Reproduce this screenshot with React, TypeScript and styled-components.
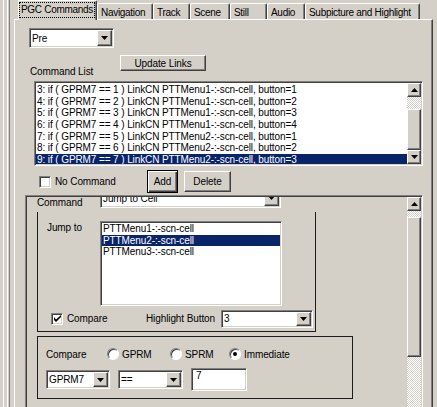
import React from "react";
import styled, { createGlobalStyle, css } from "styled-components";

const GlobalStyle = createGlobalStyle`
  html, body { margin: 0; padding: 0; background: #d4d0c8; }
  * { box-sizing: border-box; }
`;

const sunken = css`
  border: 1px solid;
  border-color: #808080 #ffffff #ffffff #808080;
  box-shadow: inset 1px 1px 0 #404040, inset -1px -1px 0 #d4d0c8;
`;

const raised = css`
  border: 1px solid;
  border-color: #ffffff #404040 #404040 #ffffff;
  box-shadow: inset -1px -1px 0 #808080;
  background: #d4d0c8;
`;

const checker = css`
  background: repeating-conic-gradient(#ffffff 0 25%, #d4d0c8 0 50%) 0 0 / 2px 2px;
`;

const Screen = styled.div`
  width: 437px;
  height: 407px;
  overflow: hidden;
  display: flex;
  background: #d4d0c8;
  color: #000;
  font-family: "Liberation Sans", Arial, sans-serif;
  font-size: 10px;
  letter-spacing: -0.1px;
`;

const Splitter = styled.div`
  width: 14px;
  flex: none;
  background: linear-gradient(
    to right,
    #d4d0c8 0 3px,
    #ffffff 3px 4px,
    #d4d0c8 4px 7px,
    #ffffff 7px 8px,
    #d4d0c8 8px 9px,
    #808080 9px 10px,
    #d4d0c8 10px
  );
`;

const TabControl = styled.div`
  width: 419px;
  flex: none;
  display: flex;
  flex-direction: column;
`;

const TabStrip = styled.div`
  height: 19px;
  display: flex;
  align-items: flex-end;
  padding-left: 4px;
  position: relative;
  z-index: 1;
`;

const Tab = styled.div<{ $w: number; $active?: boolean }>`
  width: ${(p) => p.$w}px;
  height: ${(p) => (p.$active ? 20 : 16)}px;
  margin-bottom: ${(p) => (p.$active ? -1 : 0)}px;
  border: 1px solid;
  border-bottom: none;
  border-color: #ffffff #404040 #404040 #ffffff;
  border-radius: 2px 2px 0 0;
  box-shadow: inset -1px 0 0 #808080;
  background: #d4d0c8;
  padding: ${(p) => (p.$active ? "2px 0 0 1px" : "3px 0 0 3px")};
  white-space: nowrap;
  overflow: hidden;
  line-height: 12px;
  letter-spacing: -0.3px;
`;

const FocusText = styled.span`
  display: inline-block;
  outline: 1px dotted #000;
  padding: 1px 1px;
`;

const TabPanel = styled.div`
  flex: 1;
  border-left: 1px solid #ffffff;
  border-top: 1px solid #ffffff;
  border-right: 1px solid #404040;
  box-shadow: inset -1px 0 0 #808080;
  padding: 8px 0 0 14px;
  display: flex;
  flex-direction: column;
`;

const ComboBox = styled.div<{ $w: number; $h: number }>`
  ${sunken};
  width: ${(p) => p.$w}px;
  height: ${(p) => p.$h}px;
  flex: none;
  background: #ffffff;
  padding: 1px;
  display: flex;
  align-items: stretch;
`;

const ComboText = styled.span`
  flex: 1;
  padding-left: 1px;
  white-space: nowrap;
  overflow: hidden;
  display: flex;
  align-items: center;
`;

const ComboButton = styled.span`
  ${raised};
  width: 15px;
  flex: none;
  display: flex;
  align-items: center;
  justify-content: center;
`;

const Arrow = ({ up }: { up?: boolean }) => (
  <svg width="7" height="4" viewBox="0 0 7 4">
    <path d={up ? "M3.5 0L7 4H0z" : "M0 0H7L3.5 4z"} fill="#000" />
  </svg>
);

const Combo = ({ w, h, text }: { w: number; h: number; text: string }) => (
  <ComboBox $w={w} $h={h}>
    <ComboText>{text}</ComboText>
    <ComboButton>
      <Arrow />
    </ComboButton>
  </ComboBox>
);

const LinksRow = styled.div`
  display: flex;
  height: 26px;
  margin-top: 7px;
`;

const FieldLabel = styled.span<{ $w: number; $ml?: number }>`
  width: ${(p) => p.$w}px;
  margin-left: ${(p) => p.$ml ?? 0}px;
  flex: none;
  white-space: nowrap;
`;

const ListLabel = styled(FieldLabel)`
  align-self: flex-end;
  margin-bottom: 4px;
`;

const Button = styled.button<{ $w: number; $h: number; $default?: boolean }>`
  ${raised};
  width: ${(p) => p.$w}px;
  height: ${(p) => p.$h}px;
  flex: none;
  padding: 0;
  font: inherit;
  letter-spacing: inherit;
  color: #000;
  ${(p) =>
    p.$default &&
    css`
      border: 1px solid #000;
      box-shadow: inset 1px 1px 0 #ffffff, inset -1px -1px 0 #404040, inset -2px -2px 0 #808080;
    `}
`;

const CommandList = styled.div`
  ${sunken};
  margin-left: 5px;
  width: 389px;
  height: 85px;
  background: #ffffff;
  padding: 1px;
  display: flex;
  flex: none;
`;

const Rows = styled.div`
  flex: 1;
  padding-top: 1px;
  overflow: hidden;
`;

const Row = styled.div<{ $sel?: boolean }>`
  height: 11.67px;
  line-height: 11.67px;
  padding-left: 1px;
  white-space: nowrap;
  overflow: hidden;
  background: ${(p) => (p.$sel ? "#0a246a" : "transparent")};
  color: ${(p) => (p.$sel ? "#ffffff" : "#000")};
`;

const VScroll = styled.div`
  width: 14px;
  flex: none;
  display: flex;
  flex-direction: column;
`;

const ScrollBtn = styled.div`
  ${raised};
  height: 14px;
  flex: none;
  display: flex;
  align-items: center;
  justify-content: center;
`;

const Track = styled.div<{ $h?: number }>`
  ${checker};
  height: ${(p) => (p.$h ? `${p.$h}px` : "auto")};
  flex: ${(p) => (p.$h ? "none" : 1)};
`;

const Thumb = styled.div<{ $h?: number }>`
  ${raised};
  height: ${(p) => (p.$h ? `${p.$h}px` : "auto")};
  flex: ${(p) => (p.$h ? "none" : 1)};
`;

const ActionRow = styled.div`
  display: flex;
  align-items: center;
  height: 23px;
  margin-top: 4px;
  gap: 6px;
`;

const CheckItem = styled.label<{ $w: number; $ml: number }>`
  display: flex;
  align-items: center;
  gap: 4px;
  width: ${(p) => p.$w}px;
  margin-left: ${(p) => p.$ml}px;
  flex: none;
  white-space: nowrap;
`;

const CheckBoxBox = styled.span`
  ${sunken};
  width: 12px;
  height: 12px;
  flex: none;
  background: #ffffff;
  display: flex;
  align-items: center;
  justify-content: center;
`;

const Check = ({ on }: { on?: boolean }) => (
  <CheckBoxBox>
    {on && (
      <svg width="7" height="7" viewBox="0 0 7 7">
        <path d="M0 2v3l2 2 5-5V0L2 4.5z" fill="#000" />
      </svg>
    )}
  </CheckBoxBox>
);

const ScrollPanel = styled.div`
  ${sunken};
  margin-left: -4px;
  margin-top: 2px;
  width: 398px;
  height: 230px;
  flex: none;
  padding: 1px;
  display: flex;
  overflow: hidden;
`;

const PanelContent = styled.div`
  flex: 1;
  overflow: hidden;
  display: flex;
  flex-direction: column;
  align-items: flex-start;
  padding-left: 10px;
`;

const CommandRow = styled.div`
  display: flex;
  margin-top: -9px;
`;

const CommandLabel = styled(FieldLabel)`
  padding-top: 9px;
`;

const Group = styled.div<{ $w: number; $noTop?: boolean }>`
  width: ${(p) => p.$w}px;
  border: 1px solid #1c1c1c;
  ${(p) => p.$noTop && "border-top: none;"}
  flex: none;
  margin-top: 4px;
  display: flex;
  flex-direction: column;
`;

const JumpRow = styled.div`
  display: flex;
  padding: 9px 0 0 9px;
`;

const JumpLabel = styled(FieldLabel)`
  padding-top: 1px;
`;

const JumpList = styled.div`
  ${sunken};
  width: 182px;
  height: 85px;
  background: #ffffff;
  padding: 1px;
`;

const CompareRow = styled.div`
  display: flex;
  align-items: center;
  height: 17px;
  margin: 4px 0 4px 0;
`;

const HighlightLabel = styled.span`
  width: 75px;
  flex: none;
  white-space: nowrap;
`;

const Group2Body = styled.div`
  display: flex;
  flex-direction: column;
  padding: 10px 0 7px 8px;
`;

const RadioRow = styled.div`
  display: flex;
  align-items: center;
  height: 14px;
`;

const RadioItem = styled.label<{ $w: number }>`
  width: ${(p) => p.$w}px;
  flex: none;
  display: flex;
  align-items: center;
  gap: 3px;
  white-space: nowrap;
`;

const RadioDot = styled.span<{ $on?: boolean }>`
  width: 12px;
  height: 12px;
  flex: none;
  border-radius: 50%;
  border: 1px solid;
  border-color: #808080 #ffffff #ffffff #808080;
  box-shadow: inset 1px 1px 0 #404040;
  background: #ffffff;
  display: flex;
  align-items: center;
  justify-content: center;
  &::after {
    content: "";
    width: 4px;
    height: 4px;
    border-radius: 50%;
    background: ${(p) => (p.$on ? "#000" : "transparent")};
  }
`;

const ValueRow = styled.div`
  display: flex;
  align-items: center;
  gap: 8px;
  margin-top: 7px;
`;

const TextInput = styled.div`
  ${sunken};
  width: 56px;
  height: 23px;
  background: #ffffff;
  padding: 2px 4px;
  line-height: 10px;
`;

const commands = [
  { n: 3, v: 1, m: 1, b: 1 },
  { n: 4, v: 2, m: 1, b: 2 },
  { n: 5, v: 3, m: 1, b: 3 },
  { n: 6, v: 4, m: 1, b: 4 },
  { n: 7, v: 5, m: 2, b: 1 },
  { n: 8, v: 6, m: 2, b: 2 },
  { n: 9, v: 7, m: 2, b: 3 },
];

const tabs = [
  { label: "PGC Commands", w: 79 },
  { label: "Navigation", w: 56 },
  { label: "Track", w: 37 },
  { label: "Scene", w: 40 },
  { label: "Still", w: 37 },
  { label: "Audio", w: 38 },
  { label: "Subpicture and Highlight", w: 115 },
];

export default function App() {
  return (
    <Screen>
      <GlobalStyle />
      <Splitter />
      <TabControl>
        <TabStrip>
          {tabs.map((t, i) => (
            <Tab key={t.label} $w={t.w} $active={i === 0}>
              {i === 0 ? <FocusText>{t.label}</FocusText> : t.label}
            </Tab>
          ))}
        </TabStrip>
        <TabPanel>
          <Combo w={85} h={20} text="Pre" />
          <LinksRow>
            <ListLabel $w={90} $ml={1}>
              Command List
            </ListLabel>
            <Button $w={86} $h={16}>
              Update Links
            </Button>
          </LinksRow>
          <CommandList>
            <Rows>
              {commands.map((c) => (
                <Row key={c.n} $sel={c.n === 9}>
                  {`${c.n}: if ( GPRM7 == ${c.v} ) LinkCN PTTMenu${c.m}-:-scn-cell, button=${c.b}`}
                </Row>
              ))}
            </Rows>
            <VScroll>
              <ScrollBtn>
                <Arrow up />
              </ScrollBtn>
              <Track $h={12} />
              <Thumb />
              <ScrollBtn>
                <Arrow />
              </ScrollBtn>
            </VScroll>
          </CommandList>
          <ActionRow>
            <CheckItem $w={102} $ml={10}>
              <Check />
              No Command
            </CheckItem>
            <Button $w={31} $h={23} $default>
              Add
            </Button>
            <Button $w={47} $h={21}>
              Delete
            </Button>
          </ActionRow>
          <ScrollPanel>
            <PanelContent>
              <CommandRow>
                <CommandLabel $w={63}>Command</CommandLabel>
                <Combo w={181} h={20} text="Jump to Cell" />
              </CommandRow>
              <Group $w={279} $noTop>
                <JumpRow>
                  <JumpLabel $w={53}>Jump to</JumpLabel>
                  <JumpList>
                    <Row>PTTMenu1-:-scn-cell</Row>
                    <Row $sel>PTTMenu2-:-scn-cell</Row>
                    <Row>PTTMenu3-:-scn-cell</Row>
                  </JumpList>
                </JumpRow>
                <CompareRow>
                  <CheckItem $w={95} $ml={13}>
                    <Check on />
                    Compare
                  </CheckItem>
                  <HighlightLabel>Highlight Button</HighlightLabel>
                  <Combo w={92} h={18} text="3" />
                </CompareRow>
              </Group>
              <Group $w={316}>
                <Group2Body>
                  <RadioRow>
                    <FieldLabel $w={61}>Compare</FieldLabel>
                    <RadioItem $w={63}>
                      <RadioDot />
                      GPRM
                    </RadioItem>
                    <RadioItem $w={59}>
                      <RadioDot />
                      SPRM
                    </RadioItem>
                    <RadioItem $w={70}>
                      <RadioDot $on />
                      Immediate
                    </RadioItem>
                  </RadioRow>
                  <ValueRow>
                    <Combo w={64} h={19} text="GPRM7" />
                    <Combo w={65} h={19} text="==" />
                    <TextInput>7</TextInput>
                  </ValueRow>
                </Group2Body>
              </Group>
            </PanelContent>
            <VScroll>
              <ScrollBtn>
                <Arrow up />
              </ScrollBtn>
              <Track $h={6} />
              <Thumb $h={140} />
              <Track />
            </VScroll>
          </ScrollPanel>
        </TabPanel>
      </TabControl>
    </Screen>
  );
}
